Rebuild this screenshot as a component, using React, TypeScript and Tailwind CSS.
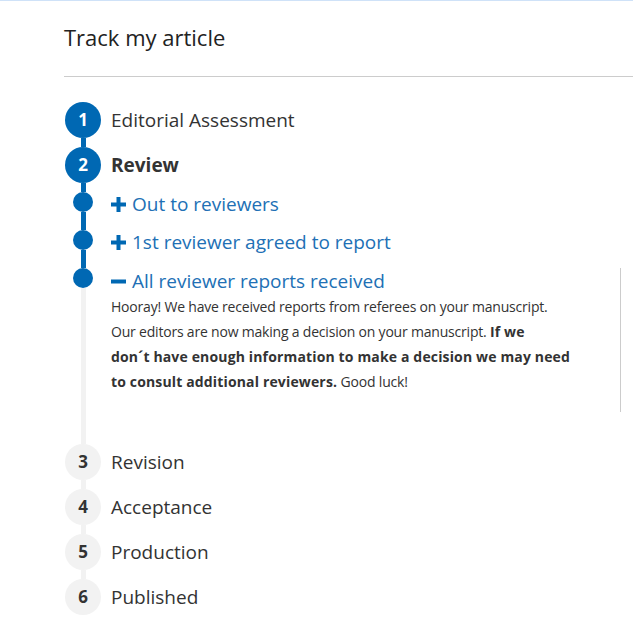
import React from 'react';

const BLUE = '#0068b3';

const Step = ({ n, label, active, bold, line }: { n: number; label: string; active?: boolean; bold?: boolean; line?: 'blue' | 'gray' | 'none' }) => (
  <div className="flex">
    <div className="flex w-[36px] flex-col items-center">
      <div
        className={`flex h-[36px] w-[36px] items-center justify-center rounded-full text-[17px] font-bold ${
          active ? 'bg-[#0068b3] text-white' : 'bg-[#f2f2f2] text-[#333]'
        }`}
      >
        {n}
      </div>
      <div className={`h-[9px] w-[5px] ${line === 'blue' ? 'bg-[#0068b3]' : line === 'gray' ? 'bg-[#f2f2f2]' : ''}`} />
    </div>
    <div className={`ml-[10px] flex h-[36px] items-center text-[19px] text-[#333] ${bold ? 'font-bold' : ''}`}>{label}</div>
  </div>
);

const Plus = () => (
  <svg width="15" height="15" viewBox="0 0 15 15" className="mr-[6px] shrink-0">
    <rect x="5.5" y="0" width="4" height="15" fill={BLUE} />
    <rect x="0" y="5.5" width="15" height="4" fill={BLUE} />
  </svg>
);

const Minus = () => (
  <svg width="15" height="15" viewBox="0 0 15 15" className="mr-[6px] shrink-0">
    <rect x="0" y="5.5" width="15" height="4" fill={BLUE} />
  </svg>
);

const SubStep = ({ label }: { label: string }) => (
  <div className="flex">
    <div className="flex w-[36px] flex-col items-center">
      <div className="h-[20px] w-[20px] rounded-full bg-[#0068b3]" />
      <div className="h-[18px] w-[5px] bg-[#0068b3]" />
    </div>
    <div className="ml-[10px] flex h-[24px] items-center text-[19px] text-[#2170b5]">
      <Plus />
      {label}
    </div>
  </div>
);

export default function App() {
  return (
    <div className="min-h-screen border-t border-[#cfe2f8] bg-white pl-[64px] font-['Open_Sans',sans-serif]">
      <h1 className="pt-[21px] text-[22px] leading-[30px] text-[#222]">Track my article</h1>
      <div className="mt-[24px] border-t border-[#cccccc]" />
      <div className="ml-[1px] mt-[25px]">
        <Step n={1} label="Editorial Assessment" active line="blue" />
        <Step n={2} label="Review" active bold line="blue" />
        <SubStep label="Out to reviewers" />
        <SubStep label="1st reviewer agreed to report" />
        <div className="flex">
          <div className="flex w-[36px] flex-col items-center">
            <div className="h-[20px] w-[20px] rounded-full bg-[#0068b3]" />
            <div className="w-[5px] flex-1 bg-[#f2f2f2]" />
          </div>
          <div className="ml-[10px] pb-[32px]">
            <div className="w-[510px] border-r border-[#cccccc] pb-[18px]">
              <div className="flex h-[26px] items-center text-[19px] text-[#2170b5]">
                <Minus />
                All reviewer reports received
              </div>
              <p className="pr-[47px] text-[14px] leading-[25px] tracking-[-0.2px] text-[#333]">
                Hooray! We have received reports from referees on your manuscript. Our editors are now making a
                decision on your manuscript.{' '}
                <b className="tracking-[0.15px]">
                  If we
                  <br />
                  don´t have enough information to make a decision we may need to consult additional reviewers.
                </b>{' '}
                Good luck!
              </p>
            </div>
          </div>
        </div>
        <Step n={3} label="Revision" line="gray" />
        <Step n={4} label="Acceptance" line="gray" />
        <Step n={5} label="Production" line="gray" />
        <Step n={6} label="Published" line="none" />
      </div>
    </div>
  );
}
